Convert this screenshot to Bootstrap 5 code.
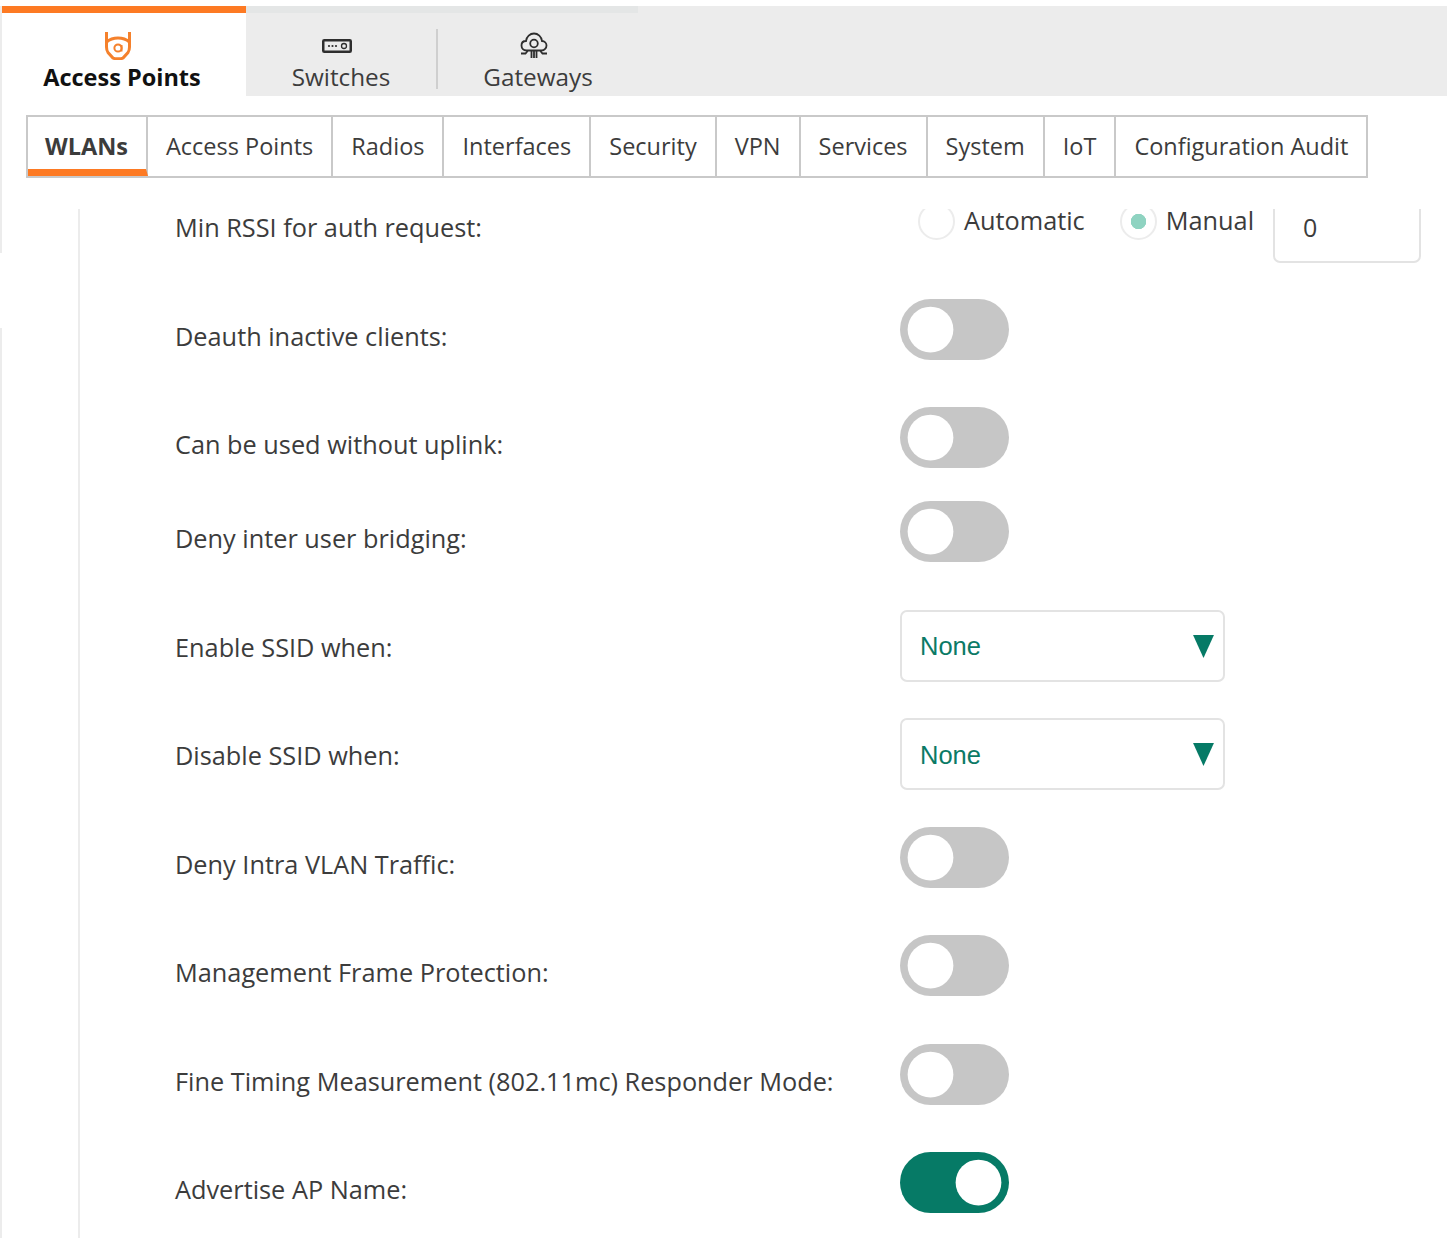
<!DOCTYPE html>
<html lang="en">
<head>
<meta charset="utf-8">
<title>Access Points</title>
<link href="https://cdn.jsdelivr.net/npm/bootstrap@5.3.0/dist/css/bootstrap.min.css" rel="stylesheet">
<style>
html,body{height:100%;}
body{font-family:"Open Sans",sans-serif;color:#3c3c3c;background:#fff;overflow:hidden;}
.pagewrap{height:1238px;padding-top:6px;background:linear-gradient(#ececec,#ececec) 0 96px/2px 157px no-repeat,linear-gradient(#ececec,#ececec) 0 328px/2px 910px no-repeat;}
.topstrip{height:90px;background:#ececec;padding-left:2px;}
.toptab{height:90px;border-top:7px solid #e4e6e6;font-size:24.3px;line-height:30px;color:#3c3c3c;}
.toptab-active{width:244px;background:#fff;border-top-color:#fd7a23;color:#111;font-weight:700;font-size:23.5px;padding-right:4px;}
.toptab-sw{width:192px;}
.toptab-gw{width:200px;}
.tabinner{height:60px;margin-top:16px;padding-top:3px;}
.tabdiv{border-right:2px solid #cfcfcf;}
.icoslot{height:28px;margin:0 8px 2px 0;}
.subwrap{padding:19px 0 0 26px;}
.subtabs{width:1342px;height:63px;border:2px solid #c9c9c9;font-size:23.5px;color:#3c3c3c;white-space:nowrap;}
.subcell{padding:0 18px;border-right:2px solid #c9c9c9;}
.subcell:last-child{border-right:0;}
.subcell-on{font-weight:700;border-bottom:7px solid #fd7a23;padding-top:7px;padding-left:17px;padding-right:18px;}
.panelclip{height:1035px;margin-top:26px;margin-left:78px;padding-left:2px;background:linear-gradient(#ececec,#ececec) 0 5px/2px 100% no-repeat;overflow:hidden;}
.rowslist{margin-top:-14px;padding-left:95px;}
.setrow{height:108.5px;}
.setrow-sm{height:94px;}
.lblcol{width:725px;padding-top:19px;font-size:25.3px;line-height:36px;white-space:nowrap;}
.tgl.form-check-input{width:109px;height:61px;margin:0;border:0;border-radius:31px;background-color:#c6c6c6;background-image:url("data:image/svg+xml,%3csvg xmlns='http://www.w3.org/2000/svg' viewBox='-4 -4 8 8'%3e%3ccircle r='3' fill='%23fff'/%3e%3c/svg%3e");float:none;}
.tgl.form-check-input:checked{background-color:#067a66;}
.tgl.form-check-input:focus{box-shadow:none;}
.selbox.form-select{width:325px;height:72px;border:2px solid #e3e3e3;border-radius:7px;font-family:"Liberation Sans",sans-serif;font-size:25.5px;color:#0b7a66;padding:2px 40px 0 18px;background-image:url("data:image/svg+xml,%3csvg xmlns='http://www.w3.org/2000/svg' viewBox='0 0 20 22'%3e%3cpath d='M0 0h20L10 22z' fill='%23067a66'/%3e%3c/svg%3e");background-size:21px 23px;background-position:right 9px top 23px;}
.rad.form-check-input{display:block;width:37px;height:37px;margin:-6px 0 0;float:none;background-color:#fff;background-image:none;border:2px solid #ececec;}
.rad.form-check-input:checked{background-image:radial-gradient(circle,#8fd3c1 0 7.5px,transparent 8px);}
.radclip{width:37px;height:32px;margin-top:6px;overflow:hidden;flex:none;}
.radlbl{font-size:25.3px;line-height:28px;margin-top:3px;}
.radgroup{margin-top:13px;gap:9px;}
.radgroup-first{margin-left:2px;}
.radgroup-second{margin-left:35px;}
.numclip{width:148px;height:54px;margin:19px 0 0 19px;overflow:hidden;flex:none;}
.numbox.form-control{width:148px;height:75px;margin-top:-21px;border:2px solid #e3e3e3;border-radius:7px;padding:3px 0 0 28px;font-size:25px;color:#3c3c3c;font-family:"Open Sans",sans-serif;}
</style>
</head>
<body>
<div class="pagewrap">
  <div class="topstrip d-flex">
    <div class="toptab toptab-active text-center">
      <div class="tabinner">
        <div class="icoslot d-flex justify-content-center">
          <svg width="28" height="28" viewBox="0 0 28 28" fill="none" stroke="#f5812c" stroke-width="3"><path d="M2.500 0v15c0 2 .5 4 1.500 5.500L9 26c1.500 1 8.500 1 10 0l5-5.500c1-1.500 1.500-3.500 1.500-5.500V0"/><path d="M2.500 10C6 7 10 6 14 6s8 1 11.500 4"/><circle cx="14" cy="16" r="3.600" stroke-width="2"/><path d="M17.600 13v6.500" stroke-width="1.800"/></svg>
        </div>
        Access Points
      </div>
    </div>
    <div class="toptab toptab-sw text-center">
      <div class="tabinner tabdiv">
        <div class="icoslot d-flex justify-content-center align-items-center">
          <svg width="30" height="14" viewBox="0 0 30 14" fill="none" stroke="#2e2e2e"><rect x="1.250" y="1.250" width="27.500" height="11.500" rx="1" stroke-width="2.500"/><circle cx="7" cy="7" r="1.100" fill="#2e2e2e" stroke="none"/><circle cx="10.500" cy="7" r="1.100" fill="#2e2e2e" stroke="none"/><circle cx="14" cy="7" r="1.100" fill="#2e2e2e" stroke="none"/><circle cx="22" cy="7" r="2.500" stroke-width="1.300"/></svg>
        </div>
        Switches
      </div>
    </div>
    <div class="toptab toptab-gw text-center">
      <div class="tabinner">
        <div class="icoslot d-flex justify-content-center">
          <svg width="28" height="28" viewBox="0 0 28 28" fill="none" stroke="#2e2e2e" stroke-width="1.800"><path d="M8 18.500H6.500C3.500 18.500 1.500 16.500 1.500 13.500S3.500 9 6 9C6.500 4.500 10 1.500 14 1.500S21.500 4.500 22 9C24.500 9 26.500 11 26.500 13.500S24.500 18.500 21.500 18.500H20"/><circle cx="14" cy="11.500" r="3.800"/><path d="M8 18.500H20M11.500 18.500V26M14 18.500V26M16.500 18.500V26M8 18.500L5.500 21.500H1M20 18.500L22.500 21.500H27"/></svg>
        </div>
        Gateways
      </div>
    </div>
  </div>

  <div class="subwrap">
    <div class="subtabs d-flex align-items-stretch">
      <div class="subcell subcell-on d-flex align-items-center">WLANs</div>
      <div class="subcell d-flex align-items-center">Access Points</div>
      <div class="subcell d-flex align-items-center">Radios</div>
      <div class="subcell d-flex align-items-center">Interfaces</div>
      <div class="subcell d-flex align-items-center">Security</div>
      <div class="subcell d-flex align-items-center">VPN</div>
      <div class="subcell d-flex align-items-center">Services</div>
      <div class="subcell d-flex align-items-center">System</div>
      <div class="subcell d-flex align-items-center">IoT</div>
      <div class="subcell d-flex align-items-center">Configuration Audit</div>
    </div>
  </div>

  <div class="panelclip">
    <div class="rowslist">
      <div class="setrow d-flex">
        <div class="lblcol">Min RSSI for auth request:</div>
        <div class="d-flex align-items-start ms-3">
          <div class="d-flex align-items-start radgroup radgroup-first"><div class="radclip"><input class="form-check-input rad" type="radio" name="rssi"></div><span class="radlbl">Automatic</span></div>
          <div class="d-flex align-items-start radgroup radgroup-second"><div class="radclip"><input class="form-check-input rad" type="radio" name="rssi" checked></div><span class="radlbl">Manual</span></div>
          <div class="numclip"><input class="form-control numbox" type="text" value="0"></div>
        </div>
      </div>
      <div class="setrow d-flex"><div class="lblcol">Deauth inactive clients:</div><div class="form-switch p-0"><input class="form-check-input tgl" type="checkbox" role="switch"></div></div>
      <div class="setrow-sm d-flex"><div class="lblcol">Can be used without uplink:</div><div class="form-switch p-0"><input class="form-check-input tgl" type="checkbox" role="switch"></div></div>
      <div class="setrow d-flex"><div class="lblcol">Deny inter user bridging:</div><div class="form-switch p-0"><input class="form-check-input tgl" type="checkbox" role="switch"></div></div>
      <div class="setrow d-flex"><div class="lblcol">Enable SSID when:</div><select class="form-select selbox"><option>None</option></select></div>
      <div class="setrow d-flex"><div class="lblcol">Disable SSID when:</div><select class="form-select selbox"><option>None</option></select></div>
      <div class="setrow d-flex"><div class="lblcol">Deny Intra VLAN Traffic:</div><div class="form-switch p-0"><input class="form-check-input tgl" type="checkbox" role="switch"></div></div>
      <div class="setrow d-flex"><div class="lblcol">Management Frame Protection:</div><div class="form-switch p-0"><input class="form-check-input tgl" type="checkbox" role="switch"></div></div>
      <div class="setrow d-flex"><div class="lblcol">Fine Timing Measurement (802.11mc) Responder Mode:</div><div class="form-switch p-0"><input class="form-check-input tgl" type="checkbox" role="switch"></div></div>
      <div class="setrow d-flex"><div class="lblcol">Advertise AP Name:</div><div class="form-switch p-0"><input class="form-check-input tgl" type="checkbox" role="switch" checked></div></div>
    </div>
  </div>
</div>
<script src="https://cdn.jsdelivr.net/npm/bootstrap@5.3.0/dist/js/bootstrap.bundle.min.js"></script>
</body>
</html>
